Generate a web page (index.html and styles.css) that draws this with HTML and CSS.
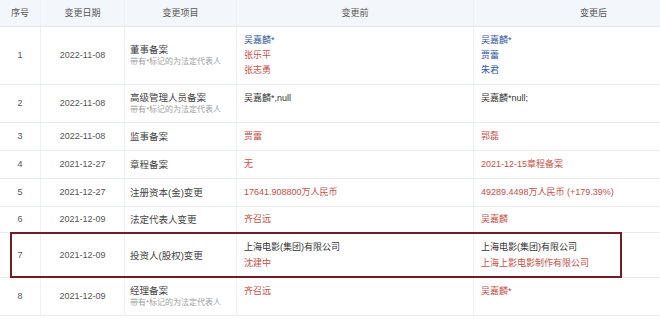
FILE: index.html
```html
<!DOCTYPE html>
<html lang="zh-CN">
<head>
<meta charset="utf-8">
<title>变更记录</title>
<link rel="stylesheet" href="styles.css">
</head>
<body>
<div class="table">
  <div class="row head">
    <div class="c no">序号</div>
    <div class="c date">变更日期</div>
    <div class="c item">变更项目</div>
    <div class="c val">变更前</div>
    <div class="c val">变更后</div>
  </div>
  <div class="row">
    <div class="c no">1</div>
    <div class="c date">2022-11-08</div>
    <div class="c item"><span class="t">董事备案</span><span class="sub">带有*标记的为法定代表人</span></div>
    <div class="c val"><span class="blue">吴嘉麟*</span><span class="red">张乐平</span><span class="red">张志勇</span></div>
    <div class="c val"><span class="blue">吴嘉麟*</span><span class="blue">贾蕾</span><span class="blue">朱君</span></div>
  </div>
  <div class="row">
    <div class="c no">2</div>
    <div class="c date">2022-11-08</div>
    <div class="c item"><span class="t">高级管理人员备案</span><span class="sub">带有*标记的为法定代表人</span></div>
    <div class="c val"><span>吴嘉麟*,null</span></div>
    <div class="c val"><span>吴嘉麟*null;</span></div>
  </div>
  <div class="row">
    <div class="c no">3</div>
    <div class="c date">2022-11-08</div>
    <div class="c item"><span class="t">监事备案</span></div>
    <div class="c val"><span class="red">贾蕾</span></div>
    <div class="c val"><span class="red">郭磊</span></div>
  </div>
  <div class="row">
    <div class="c no">4</div>
    <div class="c date">2021-12-27</div>
    <div class="c item"><span class="t">章程备案</span></div>
    <div class="c val"><span class="red">无</span></div>
    <div class="c val"><span class="red">2021-12-15章程备案</span></div>
  </div>
  <div class="row">
    <div class="c no">5</div>
    <div class="c date">2021-12-27</div>
    <div class="c item"><span class="t">注册资本(金)变更</span></div>
    <div class="c val"><span class="red">17641.908800万人民币</span></div>
    <div class="c val"><span class="red">49289.4498万人民币 (+179.39%)</span></div>
  </div>
  <div class="row short">
    <div class="c no">6</div>
    <div class="c date">2021-12-09</div>
    <div class="c item"><span class="t">法定代表人变更</span></div>
    <div class="c val"><span class="red">齐召远</span></div>
    <div class="c val"><span class="red">吴嘉麟</span></div>
  </div>
  <div class="row hl">
    <div class="c no">7</div>
    <div class="c date">2021-12-09</div>
    <div class="c item"><span class="t">投资人(股权)变更</span></div>
    <div class="c val"><span>上海电影(集团)有限公司</span><span class="red">沈建中</span></div>
    <div class="c val"><span>上海电影(集团)有限公司</span><span class="red">上海上影电影制作有限公司</span></div>
  </div>
  <div class="row">
    <div class="c no">8</div>
    <div class="c date">2021-12-09</div>
    <div class="c item"><span class="t">经理备案</span><span class="sub">带有*标记的为法定代表人</span></div>
    <div class="c val"><span class="red">齐召远</span></div>
    <div class="c val"><span class="red">吴嘉麟*</span></div>
  </div>
</div>
</body>
</html>
```
FILE: styles.css
```css
html, body {
  margin: 0;
  padding: 0;
  background: #ffffff;
  overflow: hidden;
  height: 319px;
}
body {
  font-family: "Liberation Sans", "Noto Sans CJK SC", Arial, sans-serif;
  font-size: 9px;
  color: #333333;
}
.table {
  width: 713px;
}
.row {
  position: relative;
  display: grid;
  grid-template-columns: 40px 84px 112px 237px 240px;
  border-bottom: 1px solid #e9ecef;
}
.c {
  display: flex;
  flex-direction: column;
  justify-content: center;
  padding: 6px 0 6px;
  line-height: 15px;
  border-left: 1px solid #eef0f2;
}
.c.no {
  border-left: none;
  align-items: center;
  color: #555555;
}
.c.date {
  align-items: center;
  color: #555555;
}
.c.item {
  padding-left: 5px;
  color: #444444;
}
.c.val {
  justify-content: flex-start;
  padding-left: 7px;
}
.head {
  background: #f3f6fa;
  border-bottom: 1px solid #e4e8ed;
}
.head .c {
  padding: 6px 0 5px;
  color: #555555;
}
.head .c.item, .head .c.val {
  align-items: center;
  padding-left: 0;
  justify-content: center;
}
.t {
  line-height: 13px;
  font-size: 9.5px;
}
.sub {
  font-size: 8px;
  line-height: 12px;
  color: #a0a0a0;
}
.red {
  color: #c4514a;
}
.blue {
  color: #34589e;
}
.short .c {
  padding-top: 5px;
  padding-bottom: 5px;
}
.hl .c.val {
  line-height: 16px;
}
.hl::after {
  content: "";
  position: absolute;
  left: 10px;
  width: 608px;
  top: -1px;
  bottom: -1px;
  border: 2px solid #6e1e24;
  pointer-events: none;
}
```
